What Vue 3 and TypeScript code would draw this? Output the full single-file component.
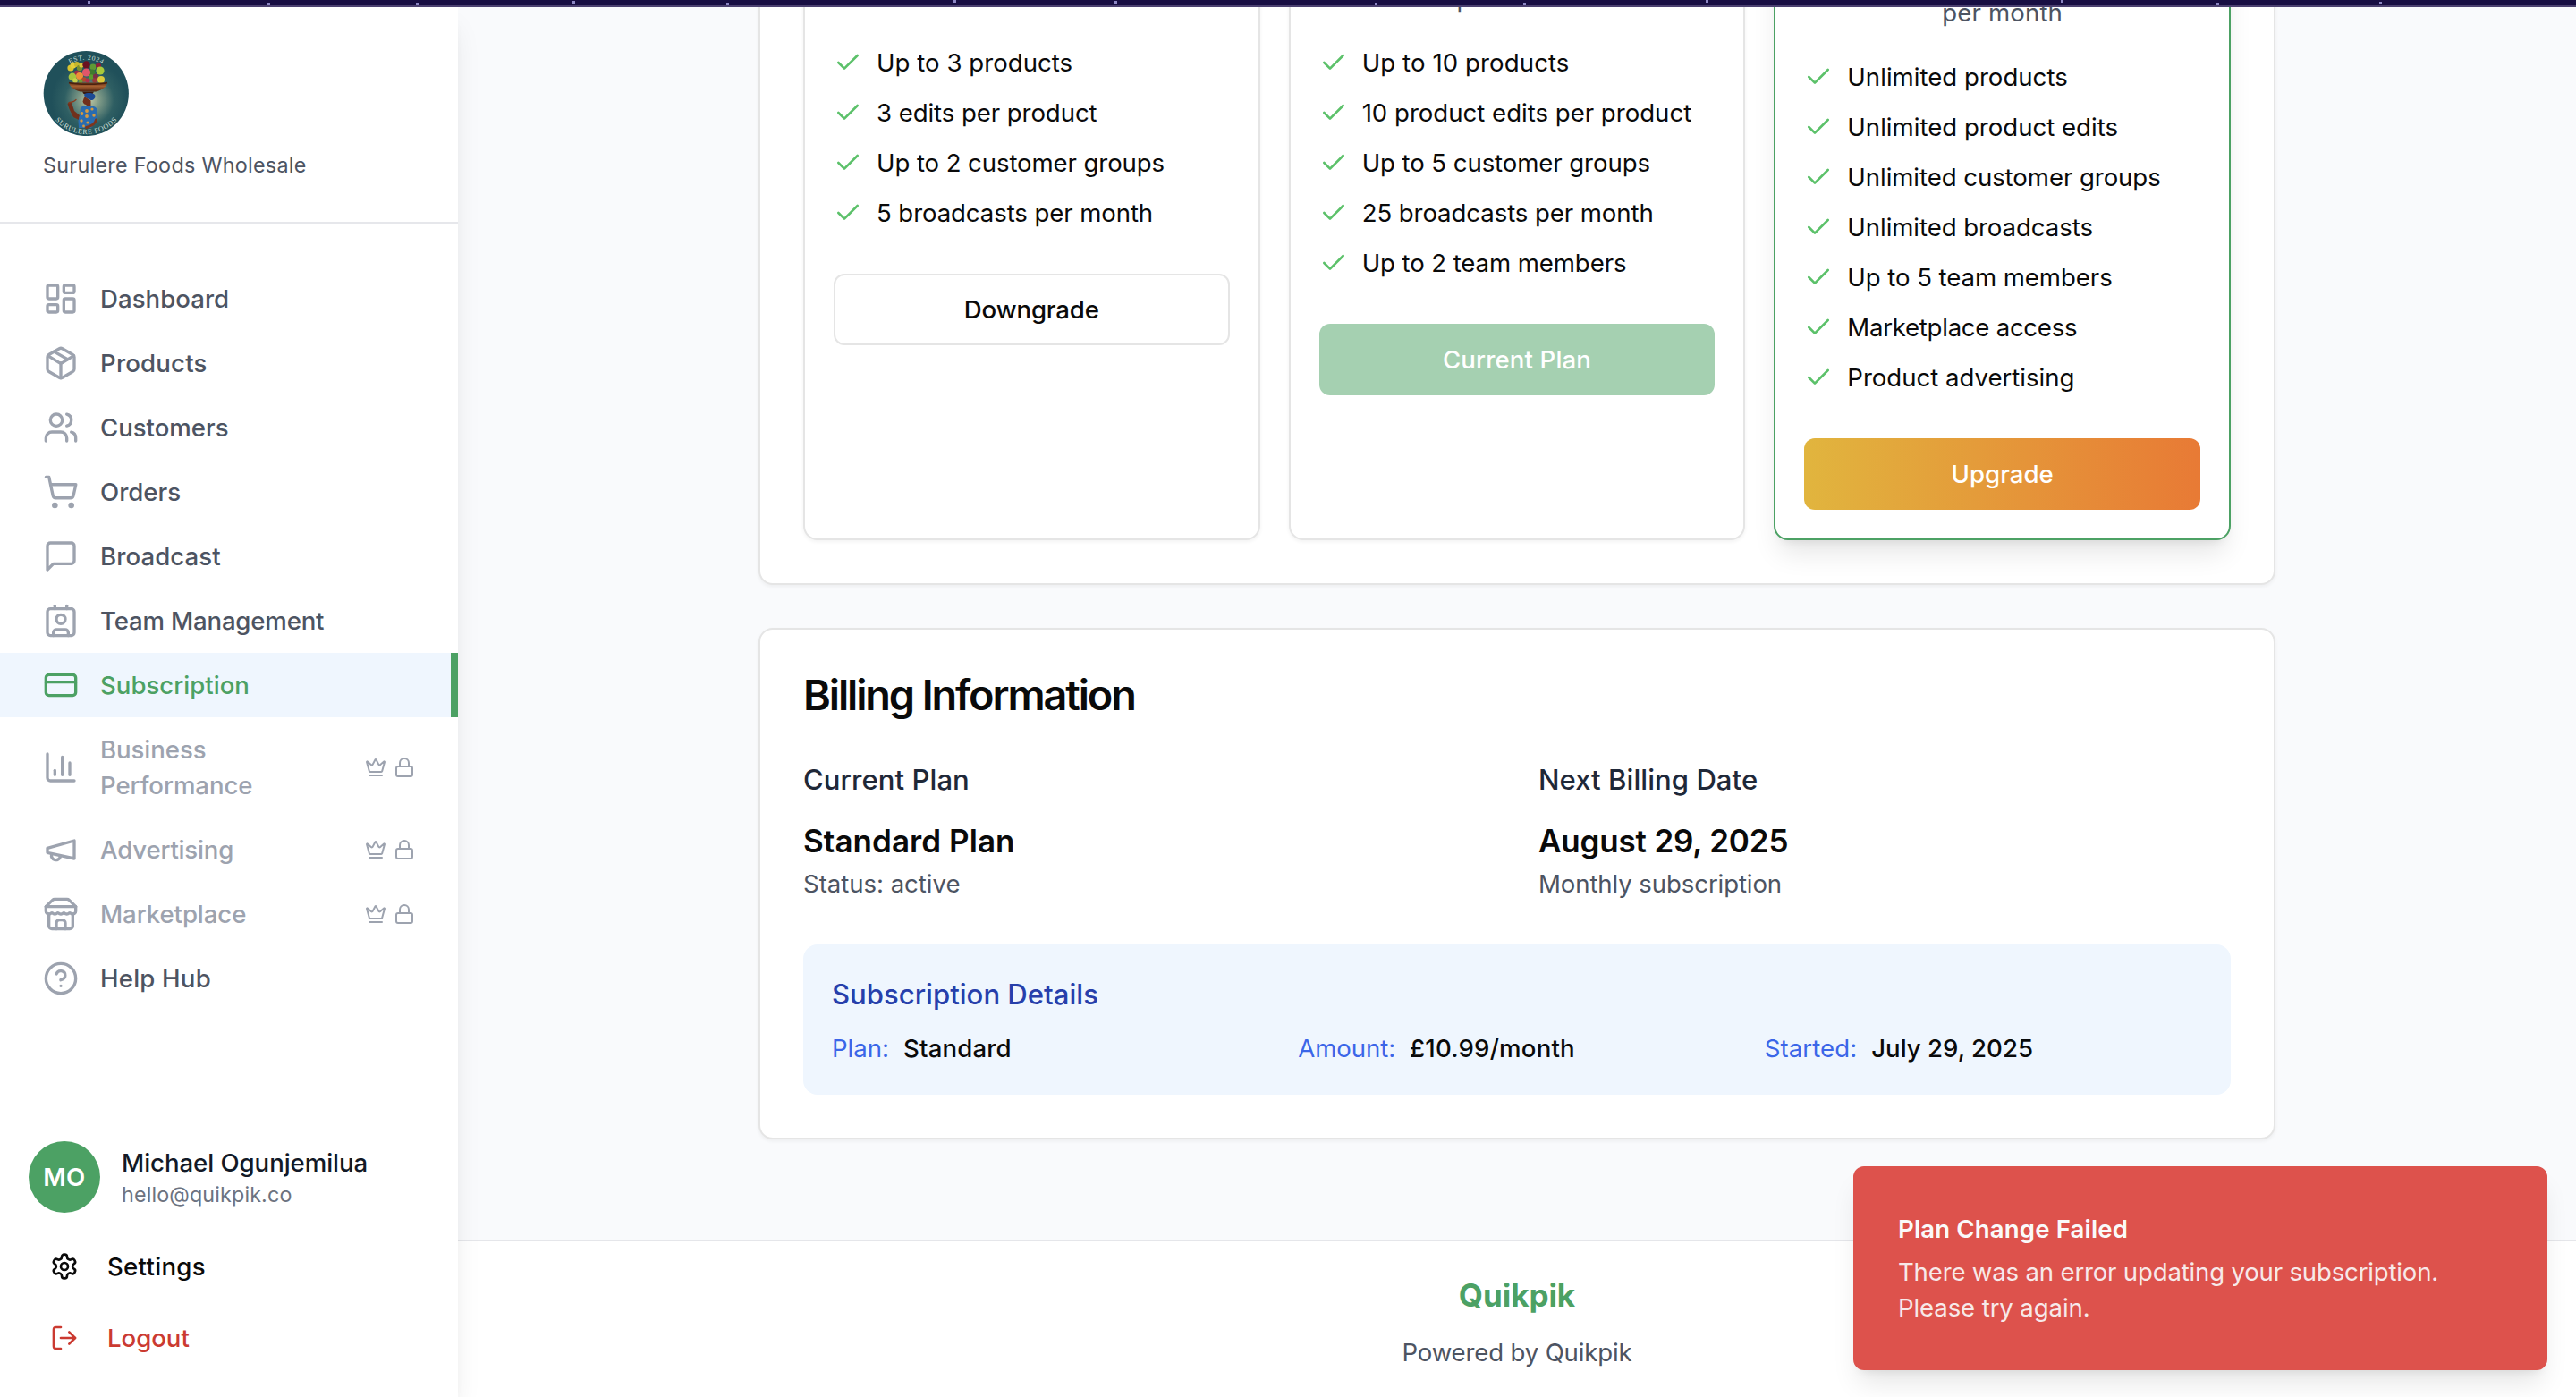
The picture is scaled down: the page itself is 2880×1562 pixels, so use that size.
<script setup lang="ts">
interface NavItem {
  label: string
  icon: string
  track: number
  active?: boolean
  locked?: boolean
}

interface Feature {
  text: string
  track: number
}

interface Plan {
  id: string
  period: string
  periodTrack: number
  featured?: boolean
  features: Feature[]
  action: string
  actionTrack: number
  variant: 'outline' | 'current' | 'upgrade'
}

const icons: Record<string, string> = {
  dashboard:
    '<rect width="7" height="9" x="3" y="3" rx="1"/><rect width="7" height="5" x="14" y="3" rx="1"/><rect width="7" height="9" x="14" y="12" rx="1"/><rect width="7" height="5" x="3" y="16" rx="1"/>',
  package:
    '<path d="M11 21.73a2 2 0 0 0 2 0l7-4A2 2 0 0 0 21 16V8a2 2 0 0 0-1-1.73l-7-4a2 2 0 0 0-2 0l-7 4A2 2 0 0 0 3 8v8a2 2 0 0 0 1 1.73z"/><path d="M12 22V12"/><path d="m3.3 7 7.703 4.734a2 2 0 0 0 1.994 0L20.7 7"/><path d="m7.5 4.27 9 5.15"/>',
  users:
    '<path d="M16 21v-2a4 4 0 0 0-4-4H6a4 4 0 0 0-4 4v2"/><circle cx="9" cy="7" r="4"/><path d="M22 21v-2a4 4 0 0 0-3-3.87"/><path d="M16 3.13a4 4 0 0 1 0 7.75"/>',
  cart:
    '<circle cx="8" cy="21" r="1"/><circle cx="19" cy="21" r="1"/><path d="M2.05 2.05h2l2.66 12.42a2 2 0 0 0 2 1.58h9.78a2 2 0 0 0 1.95-1.57l1.65-7.43H5.12"/>',
  message: '<path d="M21 15a2 2 0 0 1-2 2H7l-4 4V5a2 2 0 0 1 2-2h14a2 2 0 0 1 2 2z"/>',
  contact:
    '<path d="M16 2v2"/><path d="M7 22v-2a2 2 0 0 1 2-2h6a2 2 0 0 1 2 2v2"/><path d="M8 2v2"/><circle cx="12" cy="11" r="3"/><rect x="3" y="4" width="18" height="18" rx="2"/>',
  card: '<rect width="20" height="14" x="2" y="5" rx="2"/><path d="M2 10h20"/>',
  chart:
    '<path d="M3 3v16a2 2 0 0 0 2 2h16"/><path d="M18 17V9"/><path d="M13 17V5"/><path d="M8 17v-3"/>',
  megaphone: '<path d="m3 11 18-5v12L3 14v-3z"/><path d="M11.6 16.8a3 3 0 1 1-5.8-1.6"/>',
  store:
    '<path d="m2 7 4.41-4.41A2 2 0 0 1 7.83 2h8.34a2 2 0 0 1 1.42.59L22 7"/><path d="M4 12v8a2 2 0 0 0 2 2h12a2 2 0 0 0 2-2v-8"/><path d="M15 22v-4a2 2 0 0 0-2-2h-2a2 2 0 0 0-2 2v4"/><path d="M2 7h20"/><path d="M22 7v3a2 2 0 0 1-2 2a2.7 2.7 0 0 1-1.59-.63.7.7 0 0 0-.82 0A2.7 2.7 0 0 1 16 12a2.7 2.7 0 0 1-1.59-.63.7.7 0 0 0-.82 0A2.7 2.7 0 0 1 12 12a2.7 2.7 0 0 1-1.59-.63.7.7 0 0 0-.82 0A2.7 2.7 0 0 1 8 12a2.7 2.7 0 0 1-1.59-.63.7.7 0 0 0-.82 0A2.7 2.7 0 0 1 4 12a2 2 0 0 1-2-2V7"/>',
  help: '<circle cx="12" cy="12" r="10"/><path d="M9.09 9a3 3 0 0 1 5.83 1c0 2-3 3-3 3"/><path d="M12 17h.01"/>',
  crown:
    '<path d="M11.562 3.266a.5.5 0 0 1 .876 0L15.39 8.87a1 1 0 0 0 1.516.294L21.183 5.5a.5.5 0 0 1 .798.519l-2.834 10.246a1 1 0 0 1-.956.734H5.81a1 1 0 0 1-.957-.734L2.02 6.02a.5.5 0 0 1 .798-.519l4.276 3.664a1 1 0 0 0 1.516-.294z"/><path d="M5 21h14"/>',
  lock: '<rect width="18" height="11" x="3" y="11" rx="2"/><path d="M7 11V7a5 5 0 0 1 10 0v4"/>',
  settings:
    '<path d="M12.22 2h-.44a2 2 0 0 0-2 2v.18a2 2 0 0 1-1 1.73l-.43.25a2 2 0 0 1-2 0l-.15-.08a2 2 0 0 0-2.73.73l-.22.38a2 2 0 0 0 .73 2.73l.15.1a2 2 0 0 1 1 1.72v.51a2 2 0 0 1-1 1.74l-.15.09a2 2 0 0 0-.73 2.73l.22.38a2 2 0 0 0 2.73.73l.15-.08a2 2 0 0 1 2 0l.43.25a2 2 0 0 1 1 1.73V20a2 2 0 0 0 2 2h.44a2 2 0 0 0 2-2v-.18a2 2 0 0 1 1-1.73l.43-.25a2 2 0 0 1 2 0l.15.08a2 2 0 0 0 2.73-.73l.22-.39a2 2 0 0 0-.73-2.73l-.15-.08a2 2 0 0 1-1-1.74v-.5a2 2 0 0 1 1-1.74l.15-.09a2 2 0 0 0 .73-2.73l-.22-.38a2 2 0 0 0-2.73-.73l-.15.08a2 2 0 0 1-2 0l-.43-.25a2 2 0 0 1-1-1.73V4a2 2 0 0 0-2-2z"/><circle cx="12" cy="12" r="3"/>',
  logout:
    '<path d="M9 21H5a2 2 0 0 1-2-2V5a2 2 0 0 1 2-2h4"/><path d="m16 17 5-5-5-5"/><path d="M21 12H9"/>',
  check: '<path d="M20 6 9 17l-5-5"/>',
}

const nav: NavItem[] = [
  { label: 'Dashboard', icon: 'dashboard', track: 0.03 },
  { label: 'Products', icon: 'package', track: 0.18 },
  { label: 'Customers', icon: 'users', track: -0.03 },
  { label: 'Orders', icon: 'cart', track: 0 },
  { label: 'Broadcast', icon: 'message', track: 0.07 },
  { label: 'Team Management', icon: 'contact', track: -0.18 },
  { label: 'Subscription', icon: 'card', track: 0, active: true },
  { label: 'Business Performance', icon: 'chart', track: -0.07, locked: true },
  { label: 'Advertising', icon: 'megaphone', track: -0.18, locked: true },
  { label: 'Marketplace', icon: 'store', track: -0.08, locked: true },
  { label: 'Help Hub', icon: 'help', track: 0.2 },
]

const plans: Plan[] = [
  {
    id: 'free',
    period: 'forever',
    periodTrack: 0,
    features: [
      { text: 'Up to 3 products', track: 0.03 },
      { text: '3 edits per product', track: -0.08 },
      { text: 'Up to 2 customer groups', track: -0.1 },
      { text: '5 broadcasts per month', track: -0.1 },
    ],
    action: 'Downgrade',
    actionTrack: -0.12,
    variant: 'outline',
  },
  {
    id: 'standard',
    period: 'per month',
    periodTrack: 0.14,
    features: [
      { text: 'Up to 10 products', track: 0.09 },
      { text: '10 product edits per product', track: -0.01 },
      { text: 'Up to 5 customer groups', track: -0.09 },
      { text: '25 broadcasts per month', track: -0.09 },
      { text: 'Up to 2 team members', track: -0.1 },
    ],
    action: 'Current Plan',
    actionTrack: 0.13,
    variant: 'current',
  },
  {
    id: 'premium',
    period: 'per month',
    periodTrack: 0.14,
    featured: true,
    features: [
      { text: 'Unlimited products', track: 0.01 },
      { text: 'Unlimited product edits', track: 0 },
      { text: 'Unlimited customer groups', track: -0.07 },
      { text: 'Unlimited broadcasts', track: -0.07 },
      { text: 'Up to 5 team members', track: -0.07 },
      { text: 'Marketplace access', track: -0.27 },
      { text: 'Product advertising', track: -0.02 },
    ],
    action: 'Upgrade',
    actionTrack: 0,
    variant: 'upgrade',
  },
]

const details = [
  { label: 'Plan:', labelTrack: 0, value: 'Standard', track: 0.15 },
  { label: 'Amount:', labelTrack: -0.1, value: '£10.99/month', track: 0.2 },
  { label: 'Started:', labelTrack: 0.08, value: 'July 29, 2025', track: 0 },
]

const fruit: [number, number, number, string][] = [
  [31, 20, 3.6, '#d9c42e'], [34, 17, 3.4, '#e6cf3a'], [38, 16, 3, '#c9b82c'], [41, 20, 3.2, '#7a8f2c'],
  [43, 17, 2.6, '#d8c63c'], [48.5, 16.5, 4.2, '#6b1220'], [56, 19, 3.4, '#5f9a35'], [62, 17.5, 3, '#8c1f3a'],
  [64, 23, 4.6, '#a9c93a'], [55, 25, 3.6, '#3f7a2e'], [48.5, 25, 4.6, '#e0566a'], [38, 26, 3.2, '#9c2d45'],
  [33, 30, 4.4, '#a7c63d'], [41, 29, 4, '#ec9038'], [36, 34, 2.8, '#c8d24a'], [46, 33, 2.8, '#b44a2c'],
  [50, 34, 2.6, '#b02f4c'], [54, 30, 2.8, '#5c9a2c'], [59, 29.5, 3, '#7b2f45'], [58, 34, 2.8, '#9a3b3a'],
  [65, 33, 4, '#dcc93c'], [42, 35, 2.4, '#6f9c37'],
]

const spots: [number, number, number][] = [
  [43.5, 71, 1.9], [49, 68, 1.9], [55, 66, 1.6], [49, 74, 1.9], [57, 73, 1.7], [43, 79, 1.7],
  [50, 81, 1.6], [45.5, 85, 1.4],
]

const stars: [number, number][] = [
  [299, 3], [465, 3], [640, 1], [812, 3], [1066, 0], [1246, 1], [1537, 3], [1703, 3], [1907, 0], [2304, 0],
  [2478, 3], [2660, 2], [98, 1],
]
</script>

<template>
  <div class="screen">
    <div class="strip">
      <svg class="stars" viewBox="0 0 2880 6" width="2880" height="6">
        <rect v-for="(s, i) in stars" :key="i" :x="s[0]" :y="s[1]" width="3" height="3" fill="#8d87c4" />
      </svg>
    </div>

    <div class="body">
      <aside class="sidebar">
        <header class="brand">
          <svg class="logo" viewBox="0 0 96 96">
            <defs>
              <radialGradient id="glow" cx="54%" cy="58%" r="44%">
                <stop offset="0" stop-color="#c0c8a4" />
                <stop offset="0.3" stop-color="#789584" />
                <stop offset="0.65" stop-color="#2f5f63" />
                <stop offset="1" stop-color="#20505a" />
              </radialGradient>
              <linearGradient id="bowl" x1="0" y1="0" x2="0" y2="1">
                <stop offset="0" stop-color="#6b3417" />
                <stop offset="0.4" stop-color="#a55f31" />
                <stop offset="1" stop-color="#4d220f" />
              </linearGradient>
              <clipPath id="disc"><circle cx="48.3" cy="48.5" r="47.6" /></clipPath>
              <path id="arc-top" d="M10.5 48.5a37.8 37.8 0 0 1 75.6 0" />
              <path id="arc-bottom" d="M2.8 48.5a45.5 45.5 0 0 0 91 0" />
            </defs>
            <g clip-path="url(#disc)">
              <rect width="96" height="96" fill="url(#glow)" />
              <circle v-for="(f, i) in fruit" :key="'f' + i" :cx="f[0]" :cy="f[1]" :r="f[2]" :fill="f[3]" />
              <path d="M29 36.5h43c-1 4-5 8-13 10H42c-8-2-12-6-13-10z" fill="url(#bowl)" />
              <path d="M29 36.5c8 2.4 35 2.4 43 0" fill="none" stroke="#4a210f" stroke-width="1.4" />
              <path d="M44 46.5h13l-1.5 2.5h-10z" fill="#3a1a10" />
              <path d="M46 49.5c3-2 9-2 12 .5 1.4 3-1 6.5-4.5 6l-6.5-3z" fill="#1d4a94" />
              <path d="M47 52.5c-2 1-1.5 3-2.5 5 .8 2 1.5 3.5 4 3.5v4h5v-8.5z" fill="#71301c" />
              <path d="M27.5 60l2.5-2.5 2.5 2.5 2.5 8 6 5-1 5-6-3-4.5-9z" fill="#71301c" />
              <path d="M29 59l5.5-1.5 2.5-2" fill="none" stroke="#8a3b1e" stroke-width="1.3" stroke-linecap="round" />
              <path d="M42 64c4-2.5 14-3 18 1l1.5 11-3 5.5L54 87H40l-.5-8 1.5-6z" fill="#2a6cb0" />
              <path d="M59.5 78c-1 4.5-5 7-11 8.5" fill="none" stroke="#7c351e" stroke-width="3" stroke-linecap="round" />
              <circle v-for="(p, i) in spots" :key="'p' + i" :cx="p[0]" :cy="p[1]" :r="p[2]" fill="#d99a3e" />
              <text class="seal" fill="#d5e0dc" font-size="7.6">
                <textPath href="#arc-top" startOffset="50%" text-anchor="middle" textLength="38">EST. 2024</textPath>
              </text>
              <text class="seal" fill="#d5e0dc" font-size="8">
                <textPath href="#arc-bottom" startOffset="50%" text-anchor="middle" textLength="78">SURULERE FOODS</textPath>
              </text>
            </g>
          </svg>
          <p class="business">Surulere Foods Wholesale</p>
        </header>

        <nav class="nav">
          <a
            v-for="item in nav"
            :key="item.label"
            class="nav-item"
            :class="{ active: item.active, locked: item.locked }"
          >
            <svg class="icon nav-icon" viewBox="0 0 24 24" v-html="icons[item.icon]" />
            <span class="nav-label" :style="{ letterSpacing: item.track + 'px' }">{{ item.label }}</span>
            <span v-if="item.locked" class="badges">
              <svg class="icon tiny" viewBox="0 0 24 24" v-html="icons.crown" />
              <svg class="icon tiny" viewBox="0 0 24 24" v-html="icons.lock" />
            </span>
          </a>
        </nav>

        <div class="account">
          <div class="user">
            <div class="avatar">MO</div>
            <div>
              <p class="user-name">Michael Ogunjemilua</p>
              <p class="user-mail">hello@quikpik.co</p>
            </div>
          </div>
          <button class="link settings">
            <svg class="icon small" viewBox="0 0 24 24" v-html="icons.settings" />
            <span>Settings</span>
          </button>
          <button class="link logout">
            <svg class="icon small" viewBox="0 0 24 24" v-html="icons.logout" />
            <span>Logout</span>
          </button>
        </div>
      </aside>

      <main class="main">
        <div class="content">
          <section class="card plans">
            <article v-for="plan in plans" :key="plan.id" class="plan" :class="{ featured: plan.featured }">
              <p class="period" :style="{ letterSpacing: plan.periodTrack + 'px' }">{{ plan.period }}</p>
              <ul class="features">
                <li v-for="f in plan.features" :key="f.text">
                  <svg class="icon small check" viewBox="0 0 24 24" v-html="icons.check" />
                  <span :style="{ letterSpacing: f.track + 'px' }">{{ f.text }}</span>
                </li>
              </ul>
              <button class="btn" :class="plan.variant">
                <span :style="{ letterSpacing: plan.actionTrack + 'px' }">{{ plan.action }}</span>
              </button>
            </article>
          </section>

          <section class="card billing">
            <h2>Billing Information</h2>
            <div class="summary">
              <div>
                <h4>Current Plan</h4>
                <p class="strong">Standard Plan</p>
                <p class="muted status">Status: active</p>
              </div>
              <div>
                <h4>Next Billing Date</h4>
                <p class="strong date">August 29, 2025</p>
                <p class="muted">Monthly subscription</p>
              </div>
            </div>
            <div class="details">
              <h4>Subscription Details</h4>
              <div class="detail-row">
                <div v-for="d in details" :key="d.label" class="detail">
                  <span class="key" :style="{ letterSpacing: d.labelTrack + 'px' }">{{ d.label }}</span>
                  <span class="value" :style="{ letterSpacing: d.track + 'px' }">{{ d.value }}</span>
                </div>
              </div>
            </div>
          </section>
        </div>

        <footer class="footer">
          <p class="wordmark">Quikpik</p>
          <p class="powered">Powered by Quikpik</p>
        </footer>
      </main>
    </div>

    <div class="toast" role="alert">
      <p class="toast-title">Plan Change Failed</p>
      <p class="toast-text">There was an error updating your subscription.</p>
      <p class="toast-text second">Please try again.</p>
    </div>
  </div>
</template>

<style>
body {
  background: #f9fafc;
  overflow: hidden;
}
</style>

<style scoped>
* {
  box-sizing: border-box;
}

p,
h2,
h4,
ul {
  margin: 0;
  padding: 0;
}

.screen {
  position: relative;
  display: flex;
  flex-direction: column;
  width: 2880px;
  height: 1562px;
  overflow: hidden;
  background: #f9fafc;
  color: #0a0a0a;
  font-family: "Inter", "Liberation Sans", sans-serif;
  font-size: 27.6px;
  line-height: 40px;
}

.strip {
  flex: none;
  height: 8px;
  background: #180e43;
  border-bottom: 2px solid #4b4070;
}

.stars {
  display: block;
}

.body {
  display: flex;
  flex: 1;
  min-height: 0;
  overflow: hidden;
}

.icon {
  flex: none;
  fill: none;
  stroke: currentColor;
  stroke-width: 2;
  stroke-linecap: round;
  stroke-linejoin: round;
}

.sidebar {
  position: relative;
  z-index: 2;
  display: flex;
  flex-direction: column;
  flex: none;
  width: 512px;
  background: #fff;
  box-shadow: 0 20px 30px -6px rgba(0, 0, 0, 0.1), 0 8px 12px -8px rgba(0, 0, 0, 0.1);
}

.brand {
  display: flex;
  flex-direction: column;
  gap: 16px;
  padding: 48px;
  border-bottom: 2px solid #e6e7eb;
}

.logo {
  display: block;
  width: 96px;
  height: 96px;
}

.seal {
  font-family: "Liberation Serif", serif;
}

.business {
  font-size: 23.3px;
  line-height: 33px;
  margin-bottom: -1px;
  letter-spacing: 0.3px;
  color: #4d5462;
}

.nav {
  flex: 1;
  padding-top: 48px;
}

.nav-item {
  display: flex;
  align-items: center;
  padding: 16px 48px;
  font-weight: 500;
  color: #4d5462;
}

.nav-icon {
  width: 40px;
  height: 40px;
  margin-right: 24px;
  color: #9da3af;
}

.nav-label {
  flex: 1;
}

.nav-item.active {
  padding-right: 40px;
  border-right: 8px solid #4ca164;
  background: #eff6fe;
  color: #4ca164;
}

.nav-item.active .nav-icon {
  color: #4ca164;
}

.nav-item.locked {
  color: #9da3af;
}

.badges {
  display: flex;
  gap: 8px;
  margin-left: 16px;
}

.tiny {
  width: 24px;
  height: 24px;
}

.small {
  width: 32px;
  height: 32px;
}

.account {
  display: flex;
  flex-direction: column;
  padding: 0 32px 30px;
}

.user {
  display: flex;
  align-items: center;
  gap: 24px;
  margin-bottom: 24px;
}

.avatar {
  display: flex;
  align-items: center;
  justify-content: center;
  width: 80px;
  height: 80px;
  border-radius: 50%;
  background: #4ca164;
  color: #fff;
  font-weight: 600;
  letter-spacing: 0.4px;
}

.user-name {
  font-weight: 500;
  letter-spacing: -0.05px;
  color: #131926;
}

.user-mail {
  font-size: 23.3px;
  line-height: 32px;
  letter-spacing: 0.14px;
  color: #6d7380;
}

.link {
  display: flex;
  align-items: center;
  gap: 32px;
  height: 72px;
  padding: 0 24px;
  border: 0;
  background: none;
  color: #0a0a0a;
  font: 500 27.6px/40px "Inter", "Liberation Sans", sans-serif;
}

.settings {
  margin-bottom: 8px;
  letter-spacing: 0.28px;
}

.logout {
  color: #cb3a31;
  letter-spacing: -0.04px;
}

.main {
  display: flex;
  flex-direction: column;
  justify-content: space-between;
  flex: 1;
  min-width: 0;
}

.content {
  display: flex;
  flex-direction: column;
  gap: 48px;
  width: 1696px;
  margin: -100px auto 0;
}

.card {
  border: 2px solid #e5e5e5;
  border-radius: 16px;
  background: #fff;
  box-shadow: 0 2px 4px rgba(0, 0, 0, 0.05);
}

.plans {
  display: grid;
  grid-template-columns: repeat(3, 1fr);
  gap: 32px;
  padding: 0 48px 48px;
}

.plan {
  padding: 66px 32px 32px;
  border: 2px solid #e5e5e5;
  border-radius: 16px;
  background: #fff;
  box-shadow: 0 2px 4px rgba(0, 0, 0, 0.05);
}

.plan.featured {
  padding-top: 82px;
  border-color: #4ca164;
  box-shadow: 0 20px 30px -6px rgba(0, 0, 0, 0.1), 0 8px 12px -8px rgba(0, 0, 0, 0.1);
}

.period {
  margin-bottom: 32px;
  text-align: center;
  color: #4d5462;
}

.features {
  display: flex;
  flex-direction: column;
  gap: 16px;
  margin-bottom: 48px;
  list-style: none;
}

.features li {
  display: flex;
  align-items: center;
  gap: 16px;
}

.check {
  color: #5cc16a;
}

.btn {
  display: flex;
  align-items: center;
  justify-content: center;
  width: 100%;
  height: 80px;
  border: 0;
  border-radius: 12px;
  color: #fff;
  font: 500 27.6px/40px "Inter", "Liberation Sans", sans-serif;
}

.btn.outline {
  border: 2px solid #e5e5e5;
  background: #fff;
  color: #0a0a0a;
}

.btn.current {
  background: #a5d0b1;
}

.btn.upgrade {
  background: linear-gradient(to right, #e1b53e, #e87a35);
}

.billing {
  padding: 48px;
}

.billing h2 {
  padding-top: 2px;
  margin-bottom: 48px;
  font-size: 46.8px;
  line-height: 46px;
  font-weight: 600;
  letter-spacing: -2.1px;
}

.billing h4 {
  font-size: 31.1px;
  line-height: 48px;
  font-weight: 500;
  letter-spacing: 0.04px;
  color: #1f2838;
}

.summary {
  display: grid;
  grid-template-columns: 1fr 1fr;
  gap: 48px;
  margin-bottom: 48px;
}

.summary h4 {
  margin-bottom: 16px;
}

.strong {
  font-size: 35px;
  line-height: 56px;
  font-weight: 600;
  letter-spacing: 0.06px;
}

.strong.date {
  letter-spacing: -0.17px;
}

.muted {
  color: #4d5462;
  letter-spacing: -0.11px;
}

.muted.status {
  letter-spacing: -0.04px;
}

.details {
  padding: 32px;
  border-radius: 16px;
  background: #eff6fe;
}

.details h4 {
  margin-bottom: 16px;
  letter-spacing: 0;
  color: #273fab;
}

.detail-row {
  display: grid;
  grid-template-columns: repeat(3, 1fr);
  gap: 32px;
}

.detail {
  display: flex;
  gap: 16px;
}

.key {
  color: #3b66e8;
}

.value {
  font-weight: 500;
}

.footer {
  padding: 32px 0 30px;
  border-top: 2px solid #e5e6ea;
  background: #fff;
  text-align: center;
}

.wordmark {
  margin-bottom: 16px;
  font-size: 35px;
  line-height: 56px;
  font-weight: 700;
  letter-spacing: -0.05px;
  color: #4ca164;
}

.powered {
  letter-spacing: -0.16px;
  color: #4d5462;
}

.toast {
  position: absolute;
  right: 32px;
  bottom: 30px;
  z-index: 5;
  width: 776px;
  padding: 48px;
  border: 2px solid #dd524c;
  border-radius: 12px;
  background: #dd524c;
  color: #fafafa;
  box-shadow: 0 20px 30px -6px rgba(0, 0, 0, 0.1), 0 8px 12px -8px rgba(0, 0, 0, 0.1);
}

.toast-title {
  margin-bottom: 8px;
  font-weight: 600;
  letter-spacing: 0.13px;
}

.toast-text {
  white-space: nowrap;
  letter-spacing: -0.19px;
  opacity: 0.9;
}

.toast-text.second {
  letter-spacing: -0.12px;
}
</style>
